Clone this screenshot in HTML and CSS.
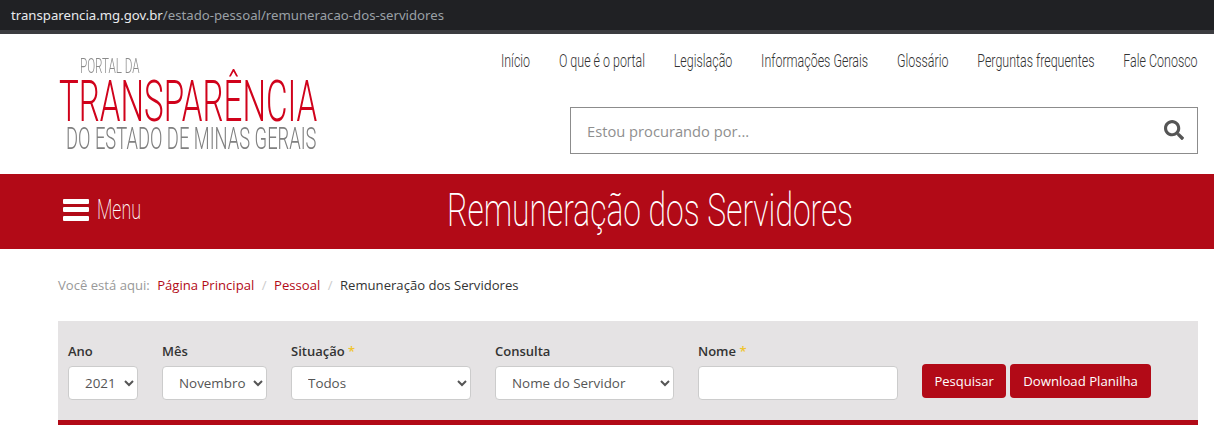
FILE: index.html
```html
<!DOCTYPE html>
<html lang="pt-BR">
<head>
<meta charset="utf-8">
<title>Remuneração dos Servidores</title>
<link rel="stylesheet" href="styles.css">
</head>
<body>
<div class="urlbar"><span class="host">transparencia.mg.gov.br</span><span class="path">/estado-pessoal/remuneracao-dos-servidores</span></div>
<header class="header">
  <a class="logo" href="#">
    <svg width="270" height="100" viewBox="0 0 270 100">
      <text class="l-top" transform="translate(22 18) scale(.584 1)">PORTAL DA</text>
      <text class="l-main" transform="translate(1 66) scale(.571 1)">TRANSPARÊNCIA</text>
      <text class="l-sub" transform="translate(8 94) scale(.592 1)">DO ESTADO DE MINAS GERAIS</text>
    </svg>
  </a>
  <div class="header-right">
    <nav class="nav">
      <a href="#">Início</a><a href="#">O que é o portal</a><a href="#">Legislação</a><a href="#">Informações Gerais</a><a href="#">Glossário</a><a href="#">Perguntas frequentes</a><a href="#">Fale Conosco</a>
    </nav>
    <div class="search">
      <input class="search-input" type="text" placeholder="Estou procurando por...">
      <svg class="search-icon" viewBox="0 0 512 512" width="20" height="20"><path d="M505 442.7L405.3 343c-4.5-4.5-10.6-7-17-7H372c27.6-35.3 44-79.7 44-128C416 93.1 322.9 0 208 0S0 93.1 0 208s93.1 208 208 208c48.3 0 92.7-16.4 128-44v16.3c0 6.4 2.5 12.5 7 17l99.7 99.7c9.4 9.4 24.6 9.4 33.9 0l28.3-28.3c9.4-9.4 9.4-24.6.1-34zM208 336c-70.7 0-128-57.2-128-128 0-70.7 57.2-128 128-128 70.7 0 128 57.2 128 128 0 70.7-57.2 128-128 128z"/></svg>
    </div>
  </div>
</header>
<section class="banner">
  <div class="menu">
    <span class="bars"><i></i><i></i><i></i></span>
    <span class="menu-label">Menu</span>
  </div>
  <h1 class="title">Remuneração dos Servidores</h1>
</section>
<ol class="crumbs">
  <li class="here">Você está aqui:</li>
  <li><a href="#">Página Principal</a></li>
  <li class="sep">/</li>
  <li><a href="#">Pessoal</a></li>
  <li class="sep">/</li>
  <li class="current">Remuneração dos Servidores</li>
</ol>
<form class="filters">
  <div class="field">
    <label>Ano</label>
    <select class="ctl w-ano"><option>2021</option></select>
  </div>
  <div class="field">
    <label>Mês</label>
    <select class="ctl w-mes"><option>Novembro</option></select>
  </div>
  <div class="field">
    <label>Situação <b>*</b></label>
    <select class="ctl w-sit"><option>Todos</option></select>
  </div>
  <div class="field">
    <label>Consulta</label>
    <select class="ctl w-con"><option>Nome do Servidor</option></select>
  </div>
  <div class="field">
    <label>Nome <b>*</b></label>
    <input class="ctl w-nome" type="text">
  </div>
  <div class="actions">
    <button class="btn" type="button">Pesquisar</button>
    <button class="btn btn-wide" type="button">Download Planilha</button>
  </div>
</form>
</body>
</html>
```
FILE: styles.css
```css
* { box-sizing: border-box; }
html, body { margin: 0; height: 443px; overflow: hidden; background: #fff; }
body { font-family: "Open Sans", "Noto Sans", sans-serif; font-size: 14px; color: #333; }
a { text-decoration: none; color: inherit; }

.urlbar {
  height: 34px;
  padding: 6px 0 0 11px;
  background: #202124;
  border-bottom: 4px solid #3b3c40;
  font-family: "Noto Sans", sans-serif;
  font-size: 13.2px;
  line-height: 18px;
  white-space: nowrap;
}
.host { color: #e8eaed; }
.path { color: #9aa0a6; }

.header { height: 140px; display: flex; justify-content: space-between; padding: 21px 16px 0 58px; }
.logo { display: block; height: 100px; will-change: transform; }
.l-top, .l-main, .l-sub { font-family: Roboto, sans-serif; font-weight: 300; }
.l-top { font-size: 20px; fill: #8a8a8a; }
.l-main { font-size: 58px; fill: #d0021b; }
.l-sub { font-size: 31px; fill: #808080; }

.header-right { width: 628px; display: flex; flex-direction: column; align-items: flex-end; }
.nav {
  display: flex;
  gap: 44px;
  width: max-content;
  height: 30px;
  flex: none;
  margin-top: -9px;
  font-family: Roboto, sans-serif;
  font-weight: 300;
  font-size: 19px;
  line-height: 30px;
  color: #333;
  white-space: nowrap;
  transform: scaleX(0.655);
  transform-origin: right center;
}
.search {
  position: relative;
  width: 628px;
  height: 47px;
  margin-top: 31px;
  border: 1px solid #8c8c8c;
}
.search-input {
  width: 100%;
  height: 100%;
  border: 0;
  padding: 0 50px 0 16px;
  outline: 0;
  background: transparent;
  font: 14.7px "Open Sans", sans-serif;
  color: #333;
}
.search-input::placeholder { color: #8f8f8f; opacity: 1; }
.search-icon { position: absolute; right: 13px; top: 12px; fill: #555; }

.banner {
  height: 75px;
  display: grid;
  grid-template-columns: 240px 1fr;
  align-items: center;
  padding: 0 217px 4px 63px;
  background: #b20a17;
  color: #fff;
}
.menu { display: flex; align-items: center; gap: 8px; }
.bars { display: flex; flex-direction: column; gap: 3.5px; width: 26px; }
.bars i { display: block; height: 5px; border-radius: 1px; background: #fff; }
.menu-label {
  font-family: Roboto, sans-serif;
  font-weight: 200;
  font-size: 27px;
  line-height: 30px;
  transform: scaleX(0.66);
  transform-origin: left center;
}
.title {
  margin: 0;
  font-family: Roboto, sans-serif;
  font-weight: 200;
  font-size: 47px;
  line-height: 60px;
  text-align: center;
  white-space: nowrap;
  transform: scaleX(0.677);
  transform-origin: center;
}

.crumbs {
  list-style: none;
  display: flex;
  gap: 7.5px;
  height: 72px;
  margin: 0;
  padding: 27px 0 0 58px;
  font-size: 13.1px;
  line-height: 18px;
}
.here { color: #999; }
.sep { color: #ccc; }
.crumbs a { color: #b20a17; }
.current { color: #333; }

.filters {
  display: flex;
  align-items: flex-start;
  gap: 24px;
  width: 1140px;
  height: 104px;
  margin-left: 58px;
  padding: 21px 0 0 10px;
  background: #e5e3e4;
  border-bottom: 5px solid #b20a17;
}
.field label { display: block; height: 24px; font-weight: 600; font-size: 13px; line-height: 18px; color: #333; }
.field b { color: #f0c52e; font-weight: 600; }
.ctl {
  display: block;
  height: 34px;
  padding: 6px 0 6px 12px;
  background: #fff;
  border: 1px solid #ccc;
  border-radius: 4px;
  font: 13.4px "Open Sans", sans-serif;
  color: #555;
}
.w-ano { width: 70px; }
.w-mes { width: 105px; }
.w-sit { width: 180px; }
.w-con { width: 179px; }
.w-nome { width: 200px; }
.actions { display: flex; gap: 4px; margin-top: 22px; }
.btn {
  height: 34px;
  padding: 0 12.5px;
  border: 0;
  border-radius: 4px;
  background: #b20a17;
  color: #fff;
  font: 13px "Open Sans", sans-serif;
}
.btn-wide { padding: 0 13px; font-size: 13.2px; }
```
